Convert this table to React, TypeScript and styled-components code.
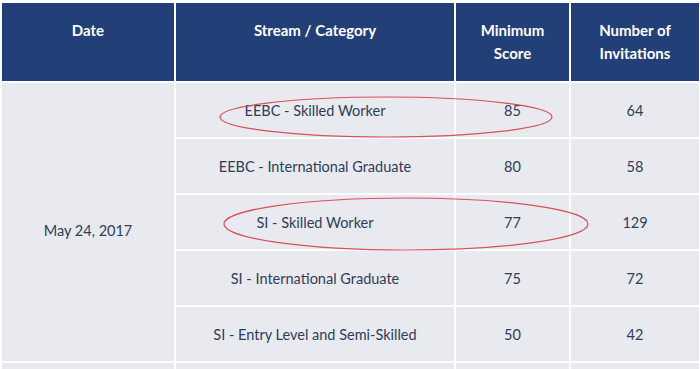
import React from 'react'
import styled, { createGlobalStyle } from 'styled-components'

const GlobalStyle = createGlobalStyle`
    html, body {
        margin: 0;
        padding: 0;
        background: #ffffff;
        font-family: Lato, "Open Sans", sans-serif;
    }
`
const Wrap = styled.div`
    position: relative;
    width: 700px;
    height: 369px;
    padding-top: 1px;
    box-sizing: border-box;
    overflow: hidden;
`
const Table = styled.table`
    border-collapse: separate;
    border-spacing: 2px;
    table-layout: fixed;
    width: 699px;
`
const Th = styled.th<{ $w: number }>`
    width: ${p => p.$w}px;
    height: 78px;
    padding: 16px 6px 0;
    box-sizing: border-box;
    vertical-align: top;
    background: #223f78;
    color: #ffffff;
    font-size: 15px;
    font-weight: 700;
    line-height: 23px;
    text-align: center;
`
const Td = styled.td<{ $shift?: number }>`
    height: 54px;
    padding: ${p => p.$shift || 0}px 6px 0;
    box-sizing: border-box;
    background: #e8eaef;
    color: #2f3d5c;
    font-size: 14.5px;
    text-align: center;
    vertical-align: middle;
`
const Marks = styled.svg`
    position: absolute;
    left: 0;
    top: 0;
    pointer-events: none;
`

const rows = [
    { stream: 'EEBC - Skilled Worker', score: 85, count: 64 },
    { stream: 'EEBC - International Graduate', score: 80, count: 58 },
    { stream: 'SI - Skilled Worker', score: 77, count: 129 },
    { stream: 'SI - International Graduate', score: 75, count: 72 },
    { stream: 'SI - Entry Level and Semi-Skilled', score: 50, count: 42 },
]

const App = () => {
    return (
        <Wrap>
            <GlobalStyle />
            <Table>
                <thead>
                    <tr>
                        <Th $w={172}>Date</Th>
                        <Th $w={278}>Stream / Category</Th>
                        <Th $w={113}>Minimum<br />Score</Th>
                        <Th $w={128}>Number of<br />Invitations</Th>
                    </tr>
                </thead>
                <tbody>
                    {rows.map((row, index) => (
                        <tr key={index}>
                            {index === 0 && <Td rowSpan={5} $shift={16}>May 24, 2017</Td>}
                            <Td>{row.stream}</Td>
                            <Td>{row.score}</Td>
                            <Td>{row.count}</Td>
                        </tr>
                    ))}
                    <tr>
                        <Td />
                        <Td />
                        <Td />
                        <Td />
                    </tr>
                </tbody>
            </Table>
            <Marks width="700" height="369">
                <ellipse cx="386" cy="117" rx="166" ry="20" fill="none" stroke="#d9505a" strokeWidth="1.2" />
                <ellipse cx="406" cy="224" rx="182" ry="26" fill="none" stroke="#d9505a" strokeWidth="1.2" />
            </Marks>
        </Wrap>
    )
}

export default App
